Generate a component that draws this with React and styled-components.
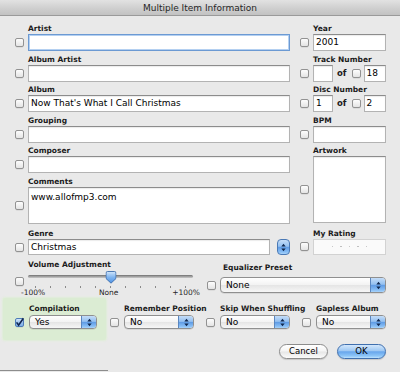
import React from "react";
import styled, { createGlobalStyle, css } from "styled-components";

const FONT = `"DejaVu Sans", "Liberation Sans", sans-serif`;

const GlobalStyle = createGlobalStyle`
  html, body { margin: 0; padding: 0; background: #e9e9e9; }
  body { font-family: ${FONT}; }
`;

const Window = styled.div`
  position: relative;
  width: 400px;
  height: 372px;
  overflow: hidden;
  background: #e9e9e9;
  font-family: ${FONT};
  color: #111;
  &::after {
    content: "";
    position: absolute;
    left: 0;
    bottom: 1px;
    width: 108px;
    height: 1px;
    background: #8d8d8d;
  }
`;

const TitleBar = styled.div`
  height: 15px;
  border-bottom: 1px solid #9a9a9a;
  background: linear-gradient(#e2e2e2, #cfcfcf 55%, #c2c2c2);
  text-align: center;
  font-size: 9px;
  line-height: 16px;
  color: #262626;
`;

const Body = styled.div`
  padding: 7px 14px 0 15px;
`;

const TopGrid = styled.div`
  display: flex;
  gap: 10px;
`;

const Column = styled.div`
  display: flex;
  flex-direction: column;
  gap: 2.5px;
  width: ${(p) => p.$w}px;
`;

const Field = styled.div`
  display: grid;
  grid-template-columns: 9px ${(p) => p.$cols || "1fr"};
  column-gap: ${(p) => p.$gap ?? 4}px;
  align-items: center;
  margin-top: ${(p) => p.$mt || 0}px;
`;

const Label = styled.div`
  grid-column: 2;
  font-size: 7.5px;
  font-weight: bold;
  line-height: 11px;
  height: 11px;
  white-space: nowrap;
  color: #1b1b1b;
  padding-left: ${(p) => p.$indent || 0}px;
`;

const Check = styled.span`
  grid-column: 1;
  width: 9px;
  height: 9px;
  box-sizing: border-box;
  border: 1px solid #929292;
  border-radius: 2px;
  background: linear-gradient(#fdfdfd, #e4e4e4);
  box-shadow: 0 0.5px 0.5px rgba(0, 0, 0, 0.12);
  display: flex;
  align-items: center;
  justify-content: center;
  align-self: ${(p) => (p.$top != null ? "start" : "center")};
  margin-top: ${(p) => p.$top || 0}px;
  ${(p) =>
    p.$checked &&
    css`
      border-color: #4d7bb8;
      background: linear-gradient(#d6e8fb, #93bdec 55%, #7fb2ea);
    `}
`;

const TextBox = styled.div`
  grid-column: 2;
  box-sizing: border-box;
  height: ${(p) => p.$h || 17}px;
  width: ${(p) => (p.$w ? `${p.$w}px` : "auto")};
  flex: ${(p) => (p.$w ? "none" : "1")};
  background: #fff;
  border: 1px solid #b3b3b3;
  border-top-color: #8c8c8c;
  box-shadow: inset 0 1px 1px rgba(0, 0, 0, 0.08);
  font-size: 9px;
  line-height: ${(p) => (p.$h || 17) - 2}px;
  padding: 0 2px;
  white-space: nowrap;
  overflow: hidden;
  color: #000;
  ${(p) =>
    p.$focus &&
    css`
      border-color: #6c9ad3;
      box-shadow: inset 0 0 0 1px #b4d0f1;
    `}
  ${(p) =>
    p.$multi &&
    css`
      line-height: 12px;
      padding-top: 3px;
    `}
`;

const Rating = styled(TextBox)`
  background: #fafafa;
  border-color: #d2d2d2;
  box-shadow: none;
  display: flex;
  align-items: center;
  justify-content: center;
  gap: 7px;
`;

const Dot = styled.span`
  width: 1.5px;
  height: 1.5px;
  border-radius: 50%;
  background: #b8b8b8;
`;

const Inline = styled.div`
  grid-column: 2;
  display: flex;
  align-items: center;
`;

const Of = styled.span`
  font-size: 8.5px;
  font-weight: bold;
  line-height: 11px;
  margin: 0 5px 0 4px;
  color: #1b1b1b;
`;

const aqua = css`
  background: linear-gradient(#c4ddf8 0%, #94c0f0 45%, #5f9be4 52%, #86bdf5 85%, #a9d3fa 100%);
`;

const Stepper = styled.span`
  width: 13px;
  height: 16px;
  margin-left: 7px;
  box-sizing: border-box;
  border-radius: 4px;
  border: 1px solid #4a79b5;
  ${aqua}
  display: flex;
  align-items: center;
  justify-content: center;
`;

const Popup = styled.div`
  grid-column: 2;
  display: flex;
  box-sizing: border-box;
  height: ${(p) => p.$h}px;
  margin-top: ${(p) => p.$mt || 0}px;
  align-self: ${(p) => (p.$mt ? "start" : "center")};
  border: 1px solid #8f8f8f;
  border-radius: 4px;
  overflow: hidden;
  background: linear-gradient(#ffffff, #f3f3f3 48%, #e5e5e5 52%, #f6f6f6);
  box-shadow: 0 0.5px 0.5px rgba(0, 0, 0, 0.15);
`;

const PopupText = styled.span`
  flex: 1;
  padding-left: 5px;
  font-size: 9px;
  line-height: ${(p) => p.$h - 2}px;
  color: #000;
`;

const PopupArrow = styled.span`
  width: 14px;
  border-left: 1px solid #5a86bf;
  ${aqua}
  display: flex;
  align-items: center;
  justify-content: center;
`;

const Arrows = () => (
  <svg width="5" height="9" viewBox="0 0 5 9">
    <path d="M0.3 3.6L2.5 0.8L4.7 3.6Z M0.3 5.4L4.7 5.4L2.5 8.2Z" fill="#10284f" />
  </svg>
);

const CheckMark = () => (
  <svg width="9" height="9" viewBox="0 0 9 9" style={{ overflow: "visible" }}>
    <path d="M1.6 4.4L3.6 7.2L8.4 0.2" fill="none" stroke="#0f2550" strokeWidth="1.6" />
  </svg>
);

const MidRow = styled.div`
  display: flex;
  margin-top: 4px;
`;

const Slider = styled.div`
  grid-column: 2;
  position: relative;
  height: 28px;
`;

const Track = styled.div`
  margin-top: 5px;
  height: 3px;
  border-radius: 2px;
  background: linear-gradient(#6f6f6f, #a9a9a9 60%, #c9c9c9);
`;

const Thumb = styled.svg`
  position: absolute;
  left: 50%;
  top: 1px;
  transform: translateX(-50%);
`;

const Ticks = styled.div`
  display: flex;
  justify-content: space-between;
  width: 151px;
  height: 2px;
  margin: 8px 0 0 6.5px;
`;

const Tick = styled.span`
  width: 1px;
  height: 2px;
  background: #8a8a8a;
`;

const Scale = styled.div`
  display: flex;
  justify-content: space-between;
  margin: 1px -7px 0 -7px;
  font-size: 7.5px;
  line-height: 8px;
  color: #262626;
`;

const Options = styled.div`
  display: flex;
  margin-left: -12px;
`;

const OptGroup = styled(Field)`
  box-sizing: border-box;
  padding: 5px 0 11px ${(p) => (p.$hl ? 12 : 0)}px;
  padding-right: ${(p) => (p.$hl ? 9 : 0)}px;
  margin-left: ${(p) => p.$ml || 0}px;
  row-gap: 1px;
  ${(p) =>
    p.$hl &&
    css`
      background: #dbecd3;
      border-radius: 2px;
      box-shadow: 0 0 2px 1px #dfeed8;
    `}
`;

const Buttons = styled.div`
  display: flex;
  justify-content: flex-end;
  gap: 9px;
  margin-top: 4px;
`;

const Button = styled.div`
  width: 49px;
  height: 15px;
  box-sizing: border-box;
  border-radius: 8px;
  border: 1px solid ${(p) => (p.$primary ? "#3f6fae" : "#8c8c8c")};
  background: ${(p) =>
    p.$primary
      ? "linear-gradient(#d3e7fc 0%, #9ec8f3 45%, #68a6ec 52%, #8ec6f8 85%, #bfe2fd 100%)"
      : "linear-gradient(#ffffff, #f4f4f4 48%, #e6e6e6 52%, #fbfbfb)"};
  box-shadow: 0 1px 1px rgba(0, 0, 0, 0.15);
  font-size: 8.5px;
  line-height: 13px;
  text-align: center;
  color: #000;
`;

function TextField({ label, value, focus, h, multi, mt }) {
  return (
    <Field $mt={mt}>
      <Label>{label}</Label>
      <Check />
      <TextBox $focus={focus} $h={h} $multi={multi}>
        {value}
      </TextBox>
    </Field>
  );
}

function OfField({ label, a, b }) {
  return (
    <Field>
      <Label>{label}</Label>
      <Check />
      <Inline>
        <TextBox $w={20}>{a}</TextBox>
        <Of>of</Of>
        <Check />
        <TextBox style={{ marginLeft: 3 }}>{b}</TextBox>
      </Inline>
    </Field>
  );
}

function PopupBox({ value, h, mt }) {
  return (
    <Popup $h={h} $mt={mt}>
      <PopupText $h={h}>{value}</PopupText>
      <PopupArrow>
        <Arrows />
      </PopupArrow>
    </Popup>
  );
}

function Option({ label, value, checked, hl, ml, w }) {
  return (
    <OptGroup $hl={hl} $ml={ml} $gap={5} $cols={`${w}px`}>
      <Label>{label}</Label>
      <Check $checked={checked}>{checked && <CheckMark />}</Check>
      <PopupBox value={value} h={14} />
    </OptGroup>
  );
}

export default function App() {
  return (
    <>
      <GlobalStyle />
      <Window>
        <TitleBar>Multiple Item Information</TitleBar>
        <Body>
          <TopGrid>
            <Column $w={275}>
              <TextField label="Artist" focus />
              <TextField label="Album Artist" />
              <TextField label="Album" value="Now That's What I Call Christmas" />
              <TextField label="Grouping" />
              <TextField label="Composer" />
              <TextField label="Comments" value="www.allofmp3.com" h={37} multi />
              <Field $mt={2}>
                <Label>Genre</Label>
                <Check />
                <Inline>
                  <TextBox $h={16}>Christmas</TextBox>
                  <Stepper>
                    <Arrows />
                  </Stepper>
                </Inline>
              </Field>
            </Column>
            <Column $w={86}>
              <TextField label="Year" value="2001" />
              <OfField label="Track Number" b="18" />
              <OfField label="Disc Number" a="1" b="2" />
              <TextField label="BPM" />
              <TextField label="Artwork" h={67} />
              <Field $mt={2}>
                <Label>My Rating</Label>
                <Check />
                <Rating $h={16}>
                  <Dot />
                  <Dot />
                  <Dot />
                  <Dot />
                  <Dot />
                </Rating>
              </Field>
            </Column>
          </TopGrid>

          <MidRow>
            <Field $cols="165px" style={{ width: 192 }}>
              <Label>Volume Adjustment</Label>
              <Check $top={7} />
              <Slider>
                <Track />
                <Thumb width="11" height="13" viewBox="0 0 11 13">
                  <defs>
                    <linearGradient id="thumbg" x1="0" y1="0" x2="0" y2="1">
                      <stop offset="0" stopColor="#d2e6fb" />
                      <stop offset="0.5" stopColor="#7fb4ef" />
                      <stop offset="1" stopColor="#4f92e3" />
                    </linearGradient>
                  </defs>
                  <path
                    d="M2 0.5H9A1.5 1.5 0 0 1 10.5 2V7.5L5.5 12.2L0.5 7.5V2A1.5 1.5 0 0 1 2 0.5Z"
                    fill="url(#thumbg)"
                    stroke="#3b6cab"
                    strokeWidth="0.9"
                  />
                </Thumb>
                <Ticks>
                  {Array.from({ length: 11 }).map((_, i) => (
                    <Tick key={i} />
                  ))}
                </Ticks>
                <Scale>
                  <span>-100%</span>
                  <span>None</span>
                  <span>+100%</span>
                </Scale>
              </Slider>
            </Field>
            <Field style={{ flex: 1 }}>
              <Label $indent={3}>Equalizer Preset</Label>
              <Check $top={6} />
              <PopupBox value="None" h={16} mt={2} />
            </Field>
          </MidRow>

          <Options>
            <Option label="Compilation" value="Yes" checked hl w={68} />
            <Option label="Remember Position" value="No" ml={4} w={70} />
            <Option label="Skip When Shuffling" value="No" ml={12} w={70} />
            <Option label="Gapless Album" value="No" ml={12} w={70} />
          </Options>

          <Buttons>
            <Button>Cancel</Button>
            <Button $primary>OK</Button>
          </Buttons>
        </Body>
      </Window>
    </>
  );
}
